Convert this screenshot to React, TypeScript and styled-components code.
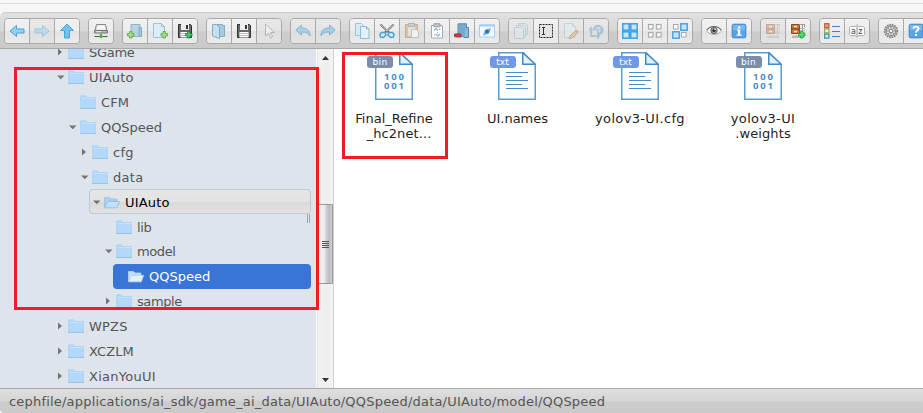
import React from "react";
import styled, { createGlobalStyle, css } from "styled-components";

const Global = createGlobalStyle`
  * { box-sizing: border-box; }
  html, body { margin: 0; padding: 0; overflow: hidden; }
  body { background: #fff; font-family: Verdana, "DejaVu Sans", sans-serif; font-size: 13px; color: #555; }
`;

const Window = styled.div`
  position: relative;
  width: 923px;
  height: 413px;
  display: flex;
  flex-direction: column;
  overflow: hidden;
`;
const TitleStrip = styled.div`
  flex: none;
  height: 12px;
  background: linear-gradient(#f8f8f8 3px, #dedede 3px, #dedede 4px, #f7f7f7 4px);
`;
const Toolbar = styled.div`
  flex: none;
  height: 37px;
  display: flex;
  align-items: flex-start;
  gap: 8px;
  padding: 5px 0 0 4px;
  overflow: hidden;
  border-top: 1px solid #cdcdcd;
  border-bottom: 1px solid #a8a8a8;
  border-top-left-radius: 5px;
  background: linear-gradient(#e1e1e1, #d6d6d6 50%, #cccccc 54%, #cacaca);
`;
const Group = styled.div`
  flex: none;
  display: flex;
  height: 26px;
  border: 1px solid #a9a9a9;
  border-radius: 4px;
  overflow: hidden;
`;
const ToolButton = styled.button<{ $off?: boolean }>`
  flex: none;
  width: 25px;
  height: 24px;
  margin: 0;
  padding: 0 1px 0 0;
  display: grid;
  place-items: center;
  border: 0;
  border-right: 1px solid #a9a9a9;
  background: ${(p) =>
    p.$off
      ? "linear-gradient(#e8e8e8, #e4e4e4 50%, #dedede 52%, #e4e4e4)"
      : "linear-gradient(#f1f1f1, #ededed 50%, #e4e4e4 52%, #ebebeb)"};
  &:last-child { width: 24px; border-right: 0; padding: 0; }
`;
const ToolSvg = styled.svg<{ $opacity: number }>`
  display: block;
  opacity: ${(p) => p.$opacity};
`;
const Workzone = styled.div`
  flex: none;
  height: 339px;
  display: flex;
`;
const TreePane = styled.div`
  width: 316px;
  padding-right: 5px;
  background: #dde4eb;
  overflow: hidden;
`;
const Tree = styled.div`
  margin-top: -10px;
`;
const Row = styled.div<{ $level: number; $state?: "hover" | "active"; $lift?: boolean }>`
  position: relative;
  height: 25px;
  margin-left: ${(p) => 53 + p.$level * 12}px;
  padding: ${(p) => (p.$lift ? "0 0 1px" : "1px 0 0")};
  display: flex;
  align-items: center;
  border-radius: 4px;
  white-space: nowrap;
  ${(p) =>
    p.$state === "hover" &&
    css`
      color: #000;
      box-shadow: inset 0 0 0 1px #bccad9;
      background: linear-gradient(#e6e6e6, #e3e3e3 50%, #d9d9d9 52%, #e4e4e4);
    `}
  ${(p) =>
    p.$state === "active" &&
    css`
      color: #fff;
      background: #3875d7;
    `}
`;
const ArrowSlot = styled.span`
  width: 15px;
  height: 16px;
  padding-left: 4px;
  display: flex;
  align-items: center;
  svg { display: block; }
`;
const RowLabel = styled.span<{ $spacing?: number }>`
  margin-left: 5px;
  padding-top: 2px;
  line-height: 16px;
  letter-spacing: ${(p) => p.$spacing ?? 0}px;
`;
const ResizeGrip = styled.span`
  position: absolute;
  right: 1px;
  bottom: -9px;
  width: 3px;
  height: 9px;
  border: solid #a0a4a8;
  border-width: 0 1px;
`;
const Scrollbar = styled.div`
  width: 18px;
  display: flex;
  flex-direction: column;
  align-items: center;
  border-left: 1px solid #fafafa;
  border-right: 1px solid #cfcfcf;
  background: linear-gradient(90deg, #e5e5e5 1px, #f2f2f2 1px, #eeeeee 60%, #f4f4f4);
`;
const ScrollArrow = styled.div`
  height: 17px;
  width: 16px;
  display: grid;
  place-items: center;
`;
const ScrollSpace = styled.div<{ $h: number }>`
  height: ${(p) => p.$h}px;
`;
const Thumb = styled.div`
  width: 15px;
  height: 80px;
  display: flex;
  flex-direction: column;
  justify-content: center;
  align-items: center;
  gap: 1px;
  border: 1px solid #999;
  border-radius: 1px;
  background: linear-gradient(90deg, #f5f5f5, #e9e9eb 45%, #cfcfd3 55%, #bdbdc1 80%, #d2d2d4);
`;
const ThumbLine = styled.i`
  width: 7px;
  height: 1px;
  background: #555;
`;
const Files = styled.div`
  flex: 1;
  display: flex;
  align-items: flex-start;
  padding-top: 3px;
  background: #fff;
`;
const FileItem = styled.div`
  flex: none;
  width: 123px;
  display: flex;
  flex-direction: column;
  align-items: center;
  color: #1e1e1e;
  &:first-child { width: 120px; margin-right: 1px; }
`;
const FileIcon = styled.div`
  position: relative;
  width: 38px;
  height: 48px;
  margin-bottom: 11px;
  svg { display: block; }
`;
const Badge = styled.span<{ $color: string; $spacing: number }>`
  position: absolute;
  left: -8px;
  top: 4px;
  width: 26px;
  height: 12px;
  border-radius: 3px;
  text-align: center;
  font-size: 9px;
  line-height: 12px;
  letter-spacing: ${(p) => p.$spacing}px;
  color: #fff;
  background: ${(p) => p.$color};
`;
const FileLine = styled.div<{ $shift?: number; $spacing?: number }>`
  line-height: 15px;
  padding-left: ${(p) => p.$shift ?? 0}px;
  letter-spacing: ${(p) => p.$spacing ?? 0}px;
  white-space: nowrap;
`;
const StatusBar = styled.div`
  flex: none;
  height: 25px;
  padding: 1px 0 0 9px;
  line-height: 24px;
  letter-spacing: 0.197px;
  border-top: 1px solid #a8a8a8;
  border-bottom-left-radius: 4px;
  color: #555;
  background: linear-gradient(#dfdfdf, #d5d5d5 50%, #cccccc 54%, #cacaca);
`;
/* Red call-out frames laid over the window */
const Callout = styled.div<{ $x: number; $y: number; $w: number; $h: number }>`
  position: absolute;
  left: ${(p) => p.$x}px;
  top: ${(p) => p.$y}px;
  width: ${(p) => p.$w}px;
  height: ${(p) => p.$h}px;
  border: 3px solid #ee1c25;
  pointer-events: none;
`;

const Doc = ({ x = 3, y = 1 }: { x?: number; y?: number }) => (
  <path d={`M${x} ${y}h8l3 3v11h-11z M${x + 8} ${y}v3h3`} fill="#dcedf6" stroke="#9cc3d8" />
);
const Plus = ({ x, y, c = "#a3dc85", s = "#5ba343" }: { x: number; y: number; c?: string; s?: string }) => (
  <path d={`M${x + 2} ${y}h2.5v2h2v2.5h-2v2h-2.5v-2h-2v-2.5h2z`} fill={c} stroke={s} strokeWidth=".8" />
);
const Floppy = () => (
  <>
    <path d="M1.500 1.500h12l1 1v12h-13z" fill="#686868" stroke="#303030" />
    <path d="M4 1h8v6H4z" fill="#eee" />
    <path d="M9 2h2v4H9z" fill="#333" />
    <path d="M3.500 9h9v5.500h-9z" fill="#fff" />
    <path d="M4 10.500h8M4 12.500h8" stroke="#bbb" />
  </>
);
/* Wooden drawer cabinet held in a clamp */
const Cabinet = () => (
  <>
    <path d="M1.500 1.500h8v9h-8z" fill="#c8753c" stroke="#8b4d26" />
    <path d="M1.500 6h8" stroke="#74401f" />
    <path d="M4 3.500h3M4 8.500h3" stroke="#fff0d0" strokeWidth="1.400" />
    <path d="M9 1.500h6M14.500 1v3M12.500 2v10" stroke="#9a9a9a" />
    <path d="M10 5.500h5M10 7.500h5M10 9.500h5" stroke="#b5b5b5" />
    <path d="M2 14h12" stroke="#a4a4a4" strokeWidth="1.600" />
    <path d="M3 12.500h5" stroke="#d0d0d0" />
  </>
);

const art: Record<string, React.ReactNode> = {
  back: <path d="M1 8l6.500-5.500V6H15v4H7.500v3.500z" fill="#8fd2f7" stroke="#4ba3d6" />,
  forward: <path d="M15 8L8.500 2.500V6H1v4h7.500v3.500z" fill="#8fd2f7" stroke="#4ba3d6" />,
  up: <path d="M8 1l6.500 6.500H10.500V15h-5V7.500H1.500z" fill="#72c1f2" stroke="#4ba3d6" />,
  netmount: (
    <>
      <path d="M3.500 1.500h9l1.500 6H2z" fill="#ddd" stroke="#888" />
      <path d="M4.500 2.500h7l.8 4H3.700z" fill="#f7f7f7" />
      <path d="M1.500 7.500h13v2.500h-13z" fill="#b5b5b5" stroke="#777" />
      <path d="M3 8.700h5" stroke="#eee" />
      <path d="M8 10.500v2" stroke="#888" strokeWidth="2" />
      <path d="M1.500 13.500h13" stroke="#555" />
      <circle cx="8" cy="13.500" r="1.800" fill="#42c036" />
    </>
  ),
  newFolder: (
    <>
      <path d="M4 1.500h9v12H4z" fill="#b5d3e2" stroke="#8fb4c7" />
      <path d="M12 4.500h2.500v9H12z" fill="#a2c6d9" stroke="#83acc2" />
      <Plus x={0.5} y={8.5} />
    </>
  ),
  newFile: <><Doc x={1.5} y={0.5} /><Plus x={9} y={8.5} /></>,
  upload: <><Floppy /><Plus x={8.5} y={8.5} c="#43c765" s="#12843a" /></>,
  open: (
    <>
      <path d="M6 1.500h5.500v1h2v11H6z" fill="#a6cbde" stroke="#82adc4" />
      <path d="M1.500 1.500h4l3 2.500v11.500L1.500 13z" fill="#c6e0ed" stroke="#82adc4" />
    </>
  ),
  download: <Floppy />,
  cursor: <path d="M4.500 1v12l3-3 2 5 2-1-2-4.500h4z" fill="#fff" stroke="#777" />,
  undo: <path d="M.8 7L6.500 2v3c5 0 8.500 2 8.500 8-2-3.500-4.500-4-8.500-4v3z" fill="#84c5ea" stroke="#4a99c7" />,
  redo: <path d="M15.200 7L9.500 2v3C4.500 5 1 7 1 13c2-3.500 4.500-4 8.500-4v3z" fill="#84c5ea" stroke="#4a99c7" />,
  copy: (
    <>
      <path d="M1.500.5h6l2 2v10h-8z" fill="#d6eaf5" stroke="#9cc6dc" />
      <path d="M6.500 3.500h6l2.500 2.500v9.500H6.500zM12.500 3.500V6H15" fill="#e3f2fa" stroke="#8fbdd5" />
    </>
  ),
  cut: (
    <>
      <path d="M1.500 1.500l9.500 9M14.500 1.500l-9.500 9" stroke="#757575" strokeWidth="2" />
      <path d="M2 2l7 6M14 2l-7 6" stroke="#ddd" strokeWidth=".8" />
      <path d="M6 9.500H2.500L1 11.500l.5 2.500 3 .5L7 12zM10 9.500h3.500l1.500 2-.5 2.500-3 .5L9 12z" fill="#d6edf8" stroke="#4d9fd3" strokeWidth="1.500" />
    </>
  ),
  paste: (
    <>
      <path d="M1.500 1.500h12v13h-12z" fill="#dba97f" stroke="#b67f51" />
      <path d="M4 4h7v9H4z" fill="#e9dfd6" />
      <path d="M4.500.5h6v3h-6z" fill="#bbb" stroke="#888" />
      <path d="M7.500 6.500h5l2 2v6h-7z" fill="#fff" stroke="#aaa" />
    </>
  ),
  duplicate: (
    <>
      <path d="M2.500 2.500h11v12.500h-11z" fill="#fff" stroke="#a1adb5" />
      <path d="M5 .8h6v3H5z" fill="#ccc" stroke="#888" strokeWidth=".8" />
      <path d="M5 7.500l2-2 2 2M11 11l-2 2-2-2M10 6.500h1.500M5 12h1.500M8 9.500h1" fill="none" stroke="#7fb4e8" strokeWidth="1.200" />
    </>
  ),
  remove: (
    <>
      <path d="M4 .8h8.500v13H4z" fill="#76a9cc" stroke="#5b90b3" />
      <path d="M12 4.500h2.500v10H10" fill="#8dbbd8" stroke="#5184a7" />
      <rect x=".5" y="11" width="6.500" height="2.800" rx=".8" fill="#df464b" stroke="#9c1f28" />
    </>
  ),
  empty: (
    <>
      <path d="M.5 2h15v12H.5z" fill="#f1f9ff" stroke="#a5cdf5" />
      <path d="M.5 2.500h15" stroke="#a5cdf5" strokeWidth="2" />
      <path d="M4 12.500l2-5.500 6-2-2 5.500z" fill="#68aadd" />
      <circle cx="8" cy="8.500" r="1.900" fill="#356fa5" />
    </>
  ),
  stack: (
    <>
      <path d="M5.500.5h7l2 2v9h-9z" fill="#cfe3ed" stroke="#88acbd" />
      <path d="M3.500 2.500h7l2 2v9h-9z" fill="#cfe3ed" stroke="#88acbd" />
      <path d="M1.500 4.500h7l2 2v9h-9z" fill="#dceaf1" stroke="#88acbd" />
    </>
  ),
  rename: (
    <>
      <path d="M1.500 1.500h13v13h-13z" fill="#e4e4e4" stroke="#222" strokeDasharray="2 1" />
      <path d="M4 4.500h3M5.500 5v6M4 11.500h3" fill="none" stroke="#333" />
    </>
  ),
  edit: (
    <>
      <Doc x={1.5} y={0.5} />
      <path d="M7 13l6-6 2 2-6 6-3 1z" fill="#f0ac4e" stroke="#a46b35" strokeWidth=".8" />
      <path d="M12.500 7.500l1-1 2 2-1 1z" fill="#e25a52" />
    </>
  ),
  resize: (
    <>
      <path d="M3 4v9h9M1 6.500h9V16" fill="none" stroke="#7ba3bd" strokeWidth="2" />
      <path d="M6 6a4.200 4.200 0 1 1 7.500 3.500L10 12" fill="none" stroke="#5f9fcb" strokeWidth="2.400" />
      <path d="M11 6l4.700-.5-.7 5z" fill="#5f9fcb" />
    </>
  ),
  icons: (
    <>
      {[0, 8].map((x) => [0, 8].map((y) => <rect key={`${x}${y}`} x={x + 0.8} y={y + 0.8} width="6.400" height="6.400" fill="#c5e6ff" stroke="#3f9fe6" strokeWidth="1.500" />))}
    </>
  ),
  small: (
    <>
      {[1.5, 9.5].map((x) => [1.5, 9.5].map((y) => <rect key={`${x}${y}`} x={x} y={y} width="4.500" height="4.500" fill="#fff" stroke="#aaa" strokeWidth="1.200" />))}
    </>
  ),
  mixed: (
    <>
      <rect x="1.500" y="1.500" width="4.500" height="4.500" fill="#fff" stroke="#aaa" />
      <rect x="9.500" y="9.500" width="4.500" height="4.500" fill="#fff" stroke="#aaa" />
      <rect x=".8" y="8.800" width="6.400" height="6.400" fill="#c5e6ff" stroke="#3f9fe6" strokeWidth="1.400" />
      <rect x="8.800" y=".8" width="6.400" height="6.400" fill="#c5e6ff" stroke="#3f9fe6" strokeWidth="1.400" />
    </>
  ),
  preview: (
    <>
      <path d="M.5 8C3.500 2 12.500 2 15.500 8 12 12.500 4 12.500 .5 8z" fill="#f4f4f4" stroke="#aaa" />
      <path d="M.8 7C4 2.300 12 2.300 15.200 7" fill="none" stroke="#666" strokeWidth="1.200" />
      <circle cx="8" cy="7.500" r="3.200" fill="#999" stroke="#555" strokeWidth=".8" />
      <circle cx="8" cy="7.500" r="1.500" fill="#222" />
      <circle cx="9" cy="6.500" r=".7" fill="#fff" />
    </>
  ),
  info: (
    <>
      <rect x="1.200" y="1.200" width="13.600" height="13.600" rx="1.500" fill="#5aa5e6" stroke="#3a83c6" />
      <path d="M2 2h12v5H2z" fill="#79b7ee" />
      <path d="M7 3.500h2.200v2H7zM6 6.500h3.200v5h1.300v1.200h-5v-1.200H7V7.700H6z" fill="#fff" />
    </>
  ),
  extract: <Cabinet />,
  archive: <><Cabinet /><Plus x={8.5} y={8.5} c="#4fe06a" s="#18a63d" /></>,
  view: (
    <>
      <rect x=".7" y=".7" width="4.200" height="4" fill="#e6a282" stroke="#b95b33" strokeWidth="1.200" />
      <rect x=".7" y="5.900" width="4.200" height="4" fill="#f5fbd5" stroke="#8fa05a" strokeWidth="1.200" />
      <rect x=".7" y="11.100" width="4.200" height="4" fill="#d4edf9" stroke="#4385ab" strokeWidth="1.200" />
      <path d="M8 3.500h8M8 8.500h8M8 13.500h8" stroke="#4a80b8" />
    </>
  ),
  sort: (
    <>
      <path d="M1.500 3.500h5l1.500-2 1.500 2h5l1 1v7l-1 1h-5l-1.500 2-1.500-2h-5l-1-1v-7z" fill="#fafafa" stroke="#b0b0b0" />
      <path d="M8 3v10" stroke="#999" />
      <text x="2" y="10.500" fontFamily="DejaVu Sans" fontSize="8" fill="#444">a</text>
      <text x="9.300" y="10.500" fontFamily="DejaVu Sans" fontSize="8" fill="#444">z</text>
    </>
  ),
  gear: (
    <>
      <circle cx="8" cy="8" r="6.200" fill="#c9c9c9" stroke="#8a8a8a" strokeWidth="2" strokeDasharray="1.640 .8" />
      <circle cx="8" cy="8" r="4.700" fill="#dcdcdc" stroke="#8a8a8a" />
      <path d="M8 3.500v9M3.500 8h9M5 5l6 6M11 5l-6 6" stroke="#8e8e8e" strokeWidth=".9" />
      <circle cx="8" cy="8" r="1.800" fill="#fafafa" stroke="#888" />
    </>
  ),
  help: (
    <>
      <rect x="1.200" y="1.200" width="13.600" height="13.600" rx="1.500" fill="#5aa5e6" stroke="#3a83c6" />
      <path d="M2 2h12v5H2z" fill="#79b7ee" />
      <path d="M5.500 5.500C5.500 2.800 11 3 10.500 6 10.200 7.800 8 7.500 8 9.700M8 11v2" fill="none" stroke="#fff" strokeWidth="1.800" />
    </>
  ),
};

/* Commands that are greyed out, with the strength of their icon */
const opacities: Record<string, number> = {
  forward: 0.45, cursor: 0.4, undo: 0.6, redo: 0.65, paste: 0.55,
  stack: 0.4, edit: 0.5, resize: 0.45, extract: 0.4,
};

const groups: string[][] = [
  ["back", "forward", "up"],
  ["netmount"],
  ["newFolder", "newFile", "upload"],
  ["open", "download", "cursor"],
  ["undo", "redo"],
  ["copy", "cut", "paste", "duplicate", "remove", "empty"],
  ["stack", "rename", "edit", "resize"],
  ["icons", "small", "mixed"],
  ["preview", "info"],
  ["extract", "archive"],
  ["view", "sort"],
  ["gear", "help"],
];

const ToolIcon = ({ name }: { name: string }) => (
  <ToolSvg width="16" height="16" viewBox="0 0 16 16" fill="none" $opacity={opacities[name] ?? 1}>
    {art[name]}
  </ToolSvg>
);

const Folder = ({ open, selected }: { open?: boolean; selected?: boolean }) => (
  <svg width="16" height="16" viewBox="0 0 16 16">
    {open ? (
      <>
        <path d="M.5 13.500V3.500h5L7 5h6v2H4z" fill={selected ? "#c3ddf5" : "#a9d0f2"} stroke={selected ? "#b4d5f3" : "#94c2ea"} strokeWidth=".8" />
        <path d="M3.300 7.500H15.500l-2.300 6.300H.8z" fill={selected ? "#e0effb" : "#c3e0f9"} stroke={selected ? "#bddaf3" : "#8fc0ea"} strokeWidth=".9" />
      </>
    ) : (
      <>
        <path d="M.3 1.500h5.500l1 1.500H16v12H.3z" fill="#b3d8fa" />
        <path d="M.8 15V2h4.700l1 1.500h9V15" fill="none" stroke="#afd4f6" />
        <path d="M1.500 4.500h14" stroke="#c5e2fb" />
        <path d="M0 14.500h16" stroke="#98c4ec" />
      </>
    )}
  </svg>
);

const Arrow = ({ dir }: { dir?: "right" | "down" }) =>
  dir ? (
    <svg width="8" height="8" viewBox="0 0 8 8">
      <path d={dir === "right" ? "M1 .5v7L5 4z" : "M0 2.500h7.500L3.750 6.300z"} fill="#757575" />
    </svg>
  ) : null;

type Node = { name: string; level: number; dir?: "right" | "down"; open?: boolean; state?: "hover" | "active"; lift?: boolean; spacing?: number };
const nodes: Node[] = [
  { name: "SGame", level: 0, dir: "right", spacing: -0.3 },
  { name: "UIAuto", level: 0, dir: "down", spacing: 0.2 },
  { name: "CFM", level: 1, spacing: 0.1 },
  { name: "QQSpeed", level: 1, dir: "down", spacing: -0.05 },
  { name: "cfg", level: 2, dir: "right", spacing: 0.3 },
  { name: "data", level: 2, dir: "down", spacing: 0.3 },
  { name: "UIAuto", level: 3, dir: "down", open: true, state: "hover", spacing: 0.2 },
  { name: "lib", level: 4, spacing: -0.3 },
  { name: "model", level: 4, dir: "down", lift: true, spacing: -0.4 },
  { name: "QQSpeed", level: 5, open: true, state: "active", lift: true },
  { name: "sample", level: 4, dir: "right", lift: true, spacing: -0.4 },
  { name: "WPZS", level: 0, dir: "right", lift: true, spacing: 0.2 },
  { name: "XCZLM", level: 0, dir: "right", lift: true, spacing: 0.1 },
  { name: "XianYouUI", level: 0, dir: "right", lift: true, spacing: 0.25 },
];

type FileEntry = { kind: "bin" | "txt"; lines: { text: string; shift?: number; spacing?: number }[] };
const files: FileEntry[] = [
  { kind: "bin", lines: [{ text: "Final_Refine" }, { text: "_hc2net...", shift: 10, spacing: 0.1 }] },
  { kind: "txt", lines: [{ text: "UI.names", shift: 2 }] },
  { kind: "txt", lines: [{ text: "yolov3-UI.cfg", shift: 1, spacing: 0.35 }] },
  { kind: "bin", lines: [{ text: "yolov3-UI", shift: 1, spacing: 0.35 }, { text: ".weights", spacing: 0.1, shift: 1 }] },
];

const FileArt = ({ kind }: { kind: "bin" | "txt" }) => (
  <svg width="38" height="48" viewBox="0 0 38 48">
    <path d="M.75.75H25L37.250 12.500V47.250H.75z" fill="#fff" stroke="#5b9bd1" strokeWidth="1.500" />
    <path d="M24.750.75V12.250H37.250z" fill="#e1f2fc" stroke="#4489c8" strokeWidth="1.500" />
    {kind === "txt" ? (
      <path d="M8 20.500h22M8 24.500h16M8 28.500h22M8 32.500h16M8 36.500h22" stroke="#4b8cc8" strokeWidth="1.100" />
    ) : (
      <g fill="#4b8cc8" fontFamily="Open Sans" fontSize="9.500" fontWeight="700">
        <text x="9 16.300 23.500" y="28.200">100</text>
        <text x="9 16.300 23.500" y="37.200">001</text>
      </g>
    )}
  </svg>
);

export default function App() {
  return (
    <>
      <Global />
      <Window>
        <TitleStrip />
        <Toolbar>
          {groups.map((group, i) => (
            <Group key={i}>
              {group.map((name) => (
                <ToolButton key={name} $off={name in opacities} aria-label={name}>
                  <ToolIcon name={name} />
                </ToolButton>
              ))}
            </Group>
          ))}
        </Toolbar>
        <Workzone>
          <TreePane>
            <Tree>
              {nodes.map((n, i) => (
                <Row key={i} $level={n.level} $state={n.state} $lift={n.lift}>
                  <ArrowSlot><Arrow dir={n.dir} /></ArrowSlot>
                  <Folder open={n.open} selected={n.state === "active"} />
                  <RowLabel $spacing={n.spacing}>{n.name}</RowLabel>
                  {n.state === "hover" && <ResizeGrip />}
                </Row>
              ))}
            </Tree>
          </TreePane>
          <Scrollbar>
            <ScrollArrow>
              <svg width="7" height="4"><path d="M3.500 0L7 4H0z" fill="#333" /></svg>
            </ScrollArrow>
            <ScrollSpace $h={138} />
            <Thumb><ThumbLine /><ThumbLine /><ThumbLine /><ThumbLine /></Thumb>
            <ScrollSpace $h={87} />
            <ScrollArrow>
              <svg width="7" height="4"><path d="M0 0h7L3.500 4z" fill="#333" /></svg>
            </ScrollArrow>
          </Scrollbar>
          <Files>
            {files.map((f, i) => (
              <FileItem key={i}>
                <FileIcon>
                  <FileArt kind={f.kind} />
                  <Badge $color={f.kind === "bin" ? "#7b8da9" : "#6f98e8"} $spacing={f.kind === "bin" ? 0.3 : 0}>{f.kind}</Badge>
                </FileIcon>
                {f.lines.map((l) => (
                  <FileLine key={l.text} $shift={l.shift} $spacing={l.spacing}>{l.text}</FileLine>
                ))}
              </FileItem>
            ))}
          </Files>
        </Workzone>
        <StatusBar>cephfile/applications/ai_sdk/game_ai_data/UIAuto/QQSpeed/data/UIAuto/model/QQSpeed</StatusBar>
        <Callout $x={14} $y={67} $w={305} $h={243} />
        <Callout $x={342} $y={52} $w={106} $h={107} />
      </Window>
    </>
  );
}
